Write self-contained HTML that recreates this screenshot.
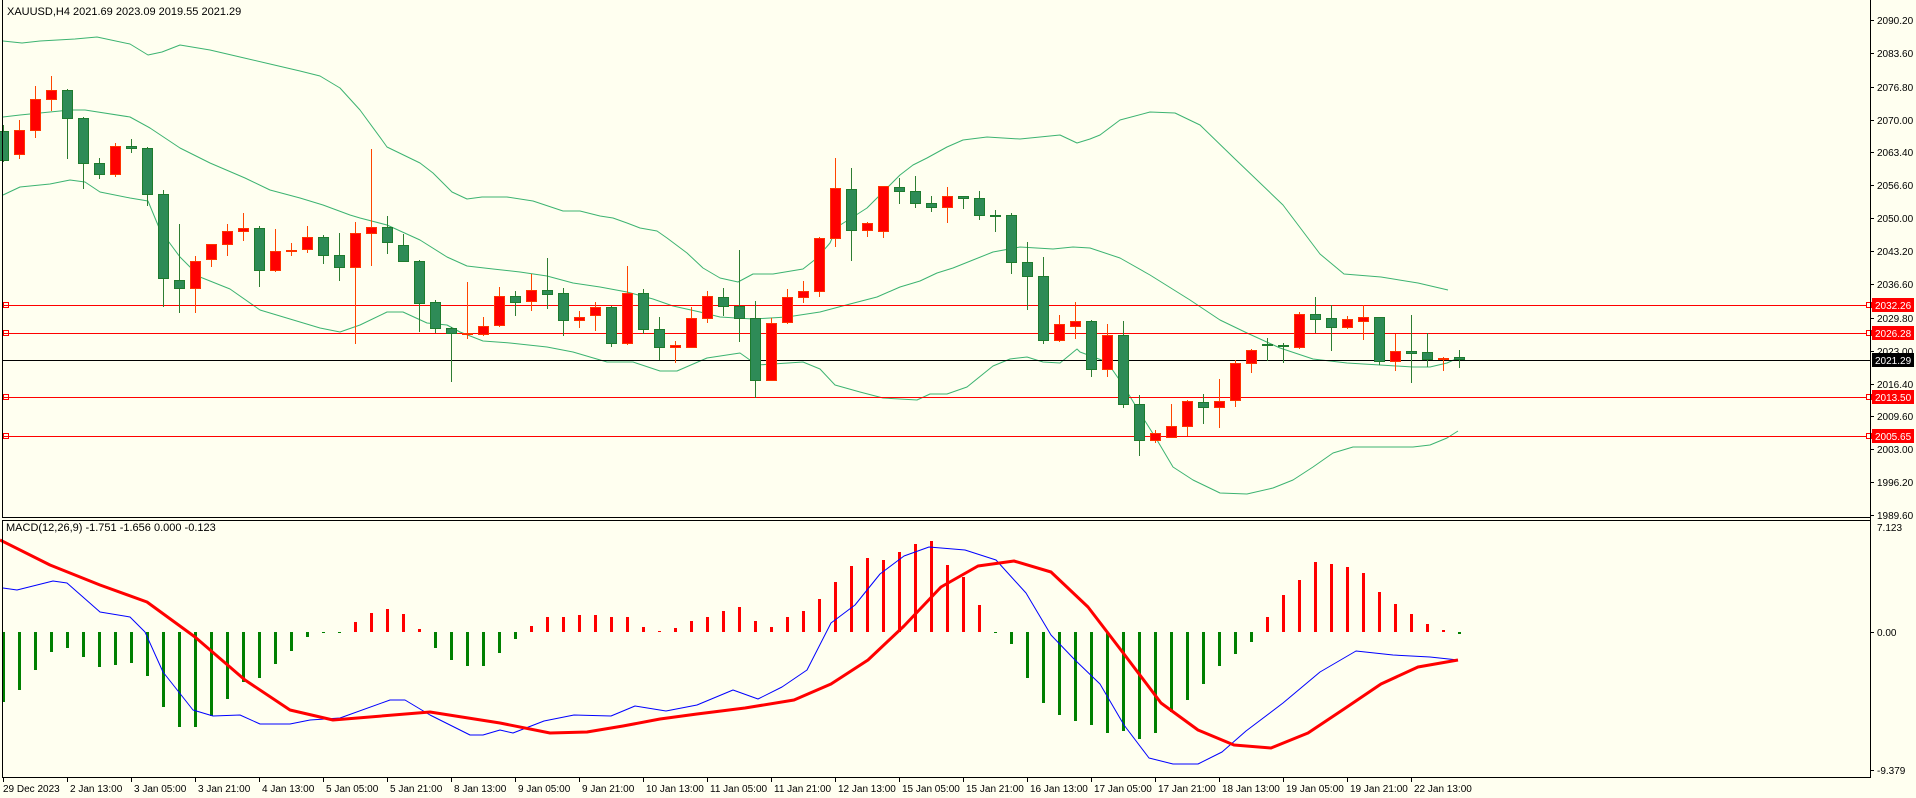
<!DOCTYPE html>
<html><head><meta charset="utf-8">
<style>
html,body{margin:0;padding:0;background:#FFFFF0;width:1916px;height:798px;overflow:hidden}
svg{display:block}
text{font-family:"Liberation Sans",Tahoma,sans-serif;font-size:11px;fill:#000}
#axis text,#time text{font-size:10px}
</style></head>
<body>
<svg id="c" width="1916" height="798" xmlns="http://www.w3.org/2000/svg">
<rect x="0" y="0" width="1916" height="798" fill="#FFFFF0"/>
<g id="bands" fill="none" stroke="#3CB371" stroke-width="1"></g>
<g id="hl"></g>
<g id="candles"></g>
<g id="hist"></g>
<g id="macd" fill="none"></g>
<line x1="2.5" y1="0" x2="2.5" y2="518" stroke="#000"/>
<line x1="1870.5" y1="0" x2="1870.5" y2="778" stroke="#000"/>
<line x1="2" y1="517.5" x2="1871" y2="517.5" stroke="#000"/>
<line x1="2" y1="520.5" x2="1871" y2="520.5" stroke="#000"/>
<line x1="2.5" y1="520" x2="2.5" y2="778" stroke="#000"/>
<line x1="2" y1="777.5" x2="1871" y2="777.5" stroke="#000"/>
<text x="7" y="15">XAUUSD,H4  2021.69 2023.09 2019.55 2021.29</text>
<text x="6" y="531">MACD(12,26,9) -1.751 -1.656 0.000 -0.123</text>
<g id="axis"></g>
<g id="time"></g>
</svg>
<script>
var NS="http://www.w3.org/2000/svg";
function el(p,t,a,txt){var e=document.createElementNS(NS,t);for(var k in a)e.setAttribute(k,a[k]);if(txt!==undefined)e.textContent=txt;document.getElementById(p).appendChild(e);return e;}
var R=1.222;
var C=[
['g',131,160,125,162],['r',130,154,120,159],['r',99,130,86,138],['r',90,99,76,111],['g',90,118,89,159],
['g',118,163,117,189],['g',163,174,158,179],['r',146,174,143,177],['g',146,148,139,153],['g',148,194,147,206],
['g',194,278,190,307],['g',280,288,224,313],['r',261,288,256,313],['r',244,259,244,267],['r',231,244,224,256],
['r',228,231,213,241],['g',228,270,226,287],['r',251,270,229,272],['r',250,251,243,256],['r',237,249,226,253],
['g',237,255,235,264],['g',255,267,233,281],['r',233,267,222,344],['r',227,233,149,266],['g',227,242,216,254],
['g',245,261,234,261],['g',261,303,260,332],['g',302,328,300,333],['g',328,333,327,382],['r',333,334,282,339],
['r',326,334,317,336],['r',296,325,287,327],['g',296,302,291,316],['r',290,301,274,311],['g',290,294,258,309],
['g',293,320,288,336],['r',317,320,311,328],['r',307,315,302,331],['g',307,343,306,347],['r',293,343,266,345],
['g',293,329,289,334],['g',329,347,317,360],['r',345,347,341,363],['r',318,347,307,348],['r',296,318,291,323],
['g',297,306,288,316],['g',306,318,250,342],['g',318,380,301,398],['r',323,380,318,380],['r',297,322,289,324],
['r',291,297,281,303],['r',238,291,237,297],['r',188,238,158,247],['g',189,230,168,261],['r',223,230,222,237],
['r',186,231,186,238],['g',187,191,178,204],['g',191,203,176,208],['g',203,207,196,212],['r',196,207,187,223],
['g',196,198,196,209],['g',198,215,191,220],['g',215,216,210,232],['g',215,262,213,274],['g',262,276,242,310],
['g',276,340,257,344],['r',324,340,315,342],['r',321,326,302,339],['g',321,369,320,377],['r',335,369,324,377],
['g',335,404,321,408],['g',404,440,395,456],['r',433,440,430,443],['r',426,437,404,437],['r',401,426,400,436],
['g',402,407,394,424],['r',401,407,379,428],['r',363,400,360,407],['r',350,363,349,373],['g',344,345,338,361],
['g',345,346,343,363],['r',314,347,312,349],['g',314,319,297,333],['g',318,327,305,351],['r',319,327,316,329],
['r',317,321,305,340],['g',317,361,317,365],['r',351,361,334,371],['g',351,353,315,383],['g',352,359,333,367],
['r',358,359,357,371],['g',357,359,350,368]];
C.forEach(function(c,k){
 var x=3+16*k, col=c[0]=='r'?'#FF0000':'#2E8B57', bd=c[0]=='r'?'#FF3300':'#1E7B2E';
 var wc=c[0]=='r'?'#FF4500':'#2E7D32';
 el('candles','line',{x1:x+0.5,x2:x+0.5,y1:c[3],y2:c[4],stroke:wc,'stroke-width':1});
 var h=Math.max(c[2]-c[1],1);
 el('candles','rect',{x:x-4.5,y:c[1]+0.5,width:10,height:h,fill:col,stroke:bd,'stroke-width':1});
});
function poly(g,pts,st,w){el(g,'polyline',{points:pts.map(function(p){return p[0]+','+p[1]}).join(' '),stroke:st,'stroke-width':w,fill:'none','stroke-linejoin':'round'});}
var up=[[3,41],[22,43],[40,41],[75,39],[97,37],[130,44],[148,55],[162,52],[180,45],[210,50],[240,57],[270,64],[300,71],[320,76],[340,88],[360,110],[382,140],[387,147],[420,163],[433,173],[452,192],[467,199],[482,197],[507,197],[533,201],[563,211],[580,211],[600,216],[613,218],[627,223],[640,228],[657,231],[667,238],[687,253],[703,268],[720,278],[738,282],[753,274],[773,274],[803,269],[817,258],[830,243],[837,227],[853,217],[867,208],[880,195],[900,175],[913,165],[927,158],[947,147],[963,140],[987,137],[1020,139],[1060,135],[1077,143],[1090,139],[1100,135],[1120,120],[1150,112],[1175,113],[1200,125],[1234,158],[1283,205],[1320,254],[1344,274],[1381,277],[1418,283],[1448,290]];
var mid=[[3,117],[20,115],[70,110],[85,110],[130,117],[150,128],[180,148],[210,163],[245,178],[270,190],[300,198],[323,205],[350,215],[360,218],[387,225],[420,240],[447,257],[467,266],[493,269],[520,272],[547,276],[573,283],[600,287],[627,292],[653,299],[673,306],[700,312],[720,317],[753,319],[787,317],[820,312],[850,304],[877,297],[900,287],[920,281],[937,273],[953,268],[973,260],[993,252],[1020,247],[1053,249],[1073,247],[1090,248],[1120,258],[1150,275],[1190,300],[1220,320],[1247,333],[1280,348],[1313,359],[1347,363],[1380,365],[1413,367],[1430,367],[1447,363],[1458,358]];
var lo=[[3,195],[20,187],[50,184],[70,180],[85,182],[100,192],[130,198],[148,201],[160,230],[180,257],[200,277],[230,289],[260,310],[290,319],[320,328],[340,332],[360,325],[387,312],[403,312],[427,323],[447,325],[460,332],[483,341],[510,343],[547,347],[573,352],[607,362],[633,362],[660,371],[677,371],[707,358],[740,353],[757,365],[773,364],[803,362],[820,369],[835,385],[860,392],[883,398],[917,400],[930,394],[947,394],[967,387],[993,366],[1010,359],[1027,357],[1043,362],[1060,363],[1077,349],[1080,352],[1107,362],[1123,385],[1140,413],[1157,440],[1173,467],[1193,480],[1220,493],[1247,494],[1273,488],[1293,480],[1313,467],[1333,453],[1353,447],[1380,447],[1413,447],[1430,445],[1447,438],[1458,431]];
poly('bands',up,'#3CB371',1);poly('bands',mid,'#3CB371',1);poly('bands',lo,'#3CB371',1);
[[305,'#FF0000','2032.26'],[333,'#FF0000','2026.28'],[397,'#FF0000','2013.50'],[436,'#FF0000','2005.65']].forEach(function(h){
 el('hl','line',{x1:3,x2:1866,y1:h[0]+0.5,y2:h[0]+0.5,stroke:h[1]});
 el('hl','rect',{x:3.5,y:h[0]-2.5,width:5,height:5,fill:'none',stroke:h[1]});
 el('hl','rect',{x:1866.5,y:h[0]-2.5,width:5,height:5,fill:'#FFFFF0',stroke:h[1]});
 el('axis','rect',{x:1872,y:h[0]-7,width:42,height:14,fill:'#FF0000'});
 el('axis','text',{x:1875,y:h[0]+4,style:'fill:#fff'},h[2]);
});
el('hl','line',{x1:3,x2:1870,y1:360.5,y2:360.5,stroke:'#000'});
el('axis','rect',{x:1872,y:353,width:42,height:14,fill:'#000'});
el('axis','text',{x:1875,y:364,style:'fill:#fff'},'2021.29');
[['2090.20',20],['2083.60',53],['2076.80',87],['2070.00',120],['2063.40',152],['2056.60',185],['2050.00',218],['2043.20',251],['2036.60',284],['2029.80',318],['2023.00',351],['2016.40',384],['2009.60',416],['2003.00',449],['1996.20',482],['1989.60',515],['7.123',527],['0.00',632],['-9.379',770]].forEach(function(a){
 if(a[0]!='7.123')el('axis','line',{x1:1870,x2:1874,y1:a[1]+0.5,y2:a[1]+0.5,stroke:'#000'});
 el('axis','text',{x:1877,y:a[1]+4},a[0]);
});
var H=[702,690,670,652,648,657,667,665,663,676,707,727,727,716,699,682,678,664,651,637,633,633,622,613,609,614,629,648,660,666,666,653];
[523,512,505,505,503,503,505,505,513,516,514,508,505,500,497,508,513,505,500,490,476,463,457,458,452,445,443,462,472,495,517,527,555,575,585,590,593,600,598,605,600,583,573,560,545,535,525,505,487,475].forEach(function(v){H.push(Math.round(v*R));});
[562,564,567,573,592,604,614,624,630,634].forEach(function(v){H.push(v);});
H.forEach(function(v,k){
 var x=3+16*k, z=632;
 if(Math.abs(v-z)<1)v=z+1;
 var col=v>z?'#008000':'#FF0000';
 el('hist','rect',{x:x-1,y:Math.min(v,z),width:3,height:Math.abs(v-z),fill:col});
});
var blue=[[3,588],[17,590],[53,581],[67,583],[100,612],[130,617],[145,632],[163,672],[193,710],[213,716],[240,715],[260,724],[290,724],[310,720],[340,718],[390,700],[405,700],[430,715],[470,735],[483,735],[500,730]];
[[420,600],[445,590],[470,585],[500,586],[520,578],[545,582],[570,577],[600,565],[620,572],[640,562],[660,548],[680,510],[700,495],[720,470],[740,455],[760,448],[790,450],[815,458],[840,485],[860,520],[880,540],[900,560],[920,593],[940,620],[960,625],[980,625],[1000,615],[1020,598],[1050,575],[1080,550],[1110,533],[1140,536],[1170,538],[1193,540]].forEach(function(p){if(p[0]*R>500)blue.push([Math.round(p[0]*R),Math.round(p[1]*R)]);});
var red=[[0,540],[50,565],[100,585],[147,602],[195,637],[245,680],[290,710],[333,720],[430,712],[500,723]];
[[450,600],[480,599],[510,594],[540,588],[570,584],[610,579],[650,573],[680,560],[710,540],[740,512],[770,480],[800,463],[830,459],[860,468],[890,497],[920,535],[950,575],[980,597],[1010,610],[1040,612],[1070,600],[1100,580],[1130,560],[1160,546],[1193,540]].forEach(function(p){if(p[0]*R>500)red.push([Math.round(p[0]*R),Math.round(p[1]*R)]);});
poly('macd',blue,'#0000FF',1);
poly('macd',red,'#FF0000',3);
var T=['29 Dec 2023','2 Jan 13:00','3 Jan 05:00','3 Jan 21:00','4 Jan 13:00','5 Jan 05:00','5 Jan 21:00','8 Jan 13:00','9 Jan 05:00','9 Jan 21:00','10 Jan 13:00','11 Jan 05:00','11 Jan 21:00','12 Jan 13:00','15 Jan 05:00','15 Jan 21:00','16 Jan 13:00','17 Jan 05:00','17 Jan 21:00','18 Jan 13:00','19 Jan 05:00','19 Jan 21:00','22 Jan 13:00'];
T.forEach(function(t,i){var x=3+64*i;
 el('time','line',{x1:x+0.5,x2:x+0.5,y1:778,y2:782,stroke:'#000'});
 el('time','text',{x:x+(i==0?0:3),y:792},t);});
</script>
</body></html>
